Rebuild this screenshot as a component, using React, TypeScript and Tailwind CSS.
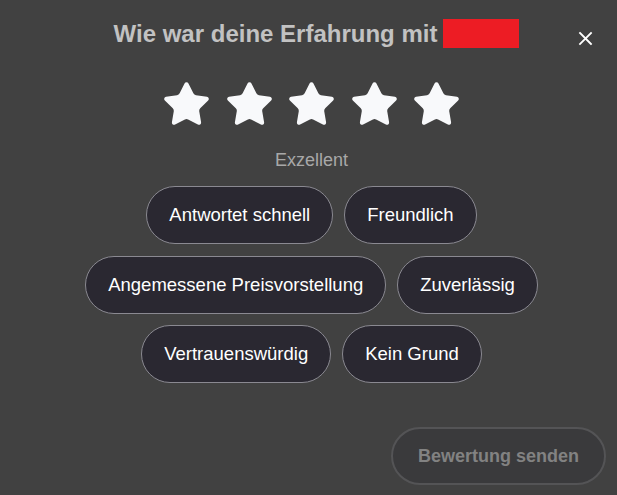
import React from "react";

const Star = () => (
  <svg width="51" height="51" viewBox="0 0 24 24" fill="#f8f9fb" stroke="#f8f9fb" strokeWidth="1" strokeLinejoin="round">
    <path d="M11.525 2.295a.53.53 0 0 1 .95 0l2.31 4.679a2.123 2.123 0 0 0 1.595 1.16l5.166.756a.53.53 0 0 1 .294.904l-3.736 3.638a2.123 2.123 0 0 0-.611 1.878l.882 5.14a.53.53 0 0 1-.771.56l-4.618-2.428a2.122 2.122 0 0 0-1.973 0L6.396 21.01a.53.53 0 0 1-.77-.56l.881-5.139a2.122 2.122 0 0 0-.611-1.879L2.16 9.795a.53.53 0 0 1 .294-.906l5.165-.755a2.122 2.122 0 0 0 1.597-1.16z" />
  </svg>
);

const chips = [
  "Antwortet schnell",
  "Freundlich",
  "Angemessene Preisvorstellung",
  "Zuverlässig",
  "Vertrauenswürdig",
  "Kein Grund",
];

export default function App() {
  return (
    <div
      className="relative w-[617px] h-[495px] bg-[#414141] flex flex-col overflow-hidden"
      style={{ fontFamily: '"Liberation Sans", Arial, sans-serif' }}
    >
      <button className="absolute left-[578px] top-[31px] w-[15px] h-[15px] flex items-center justify-center">
        <svg width="15" height="15" viewBox="0 0 15 15" stroke="#ffffff" strokeWidth="1.8" strokeLinecap="square">
          <path d="M2 2L13 13M13 2L2 13" />
        </svg>
      </button>

      <div className="flex items-center justify-center pl-[16px] mt-[19px] h-[29px]">
        <span className="text-[24px] leading-[29px] font-bold text-[#c2c2c2]">Wie war deine Erfahrung mit</span>
        <span className="ml-[6px] w-[76px] h-[29px] bg-[#ed1c24]" />
      </div>

      <div className="flex flex-col items-center pl-[6px]">
        <div className="flex gap-[11.5px] mt-[31px]">
          <Star />
          <Star />
          <Star />
          <Star />
          <Star />
        </div>
        <div className="mt-[17px] text-[18px] leading-[27px] text-[#a8a8a8]">Exzellent</div>
        <div className="mt-[12px] w-[480px] flex flex-wrap justify-center gap-x-[11px] gap-y-[11.5px]">
          {chips.map((c) => (
            <div
              key={c}
              className="h-[58px] px-[22px] flex items-center rounded-full border border-[#8a8991] bg-[#2a2831] text-[18.5px] text-white"
            >
              {c}
            </div>
          ))}
        </div>
      </div>

      <div className="flex-1" />
      <div className="flex justify-end pr-[11px] pb-[10px]">
        <div className="h-[58px] px-[25px] flex items-center rounded-full border-2 border-[#545456] bg-[#3a3a3c] text-[18px] font-bold text-[#828282]">
          Bewertung senden
        </div>
      </div>
    </div>
  );
}
